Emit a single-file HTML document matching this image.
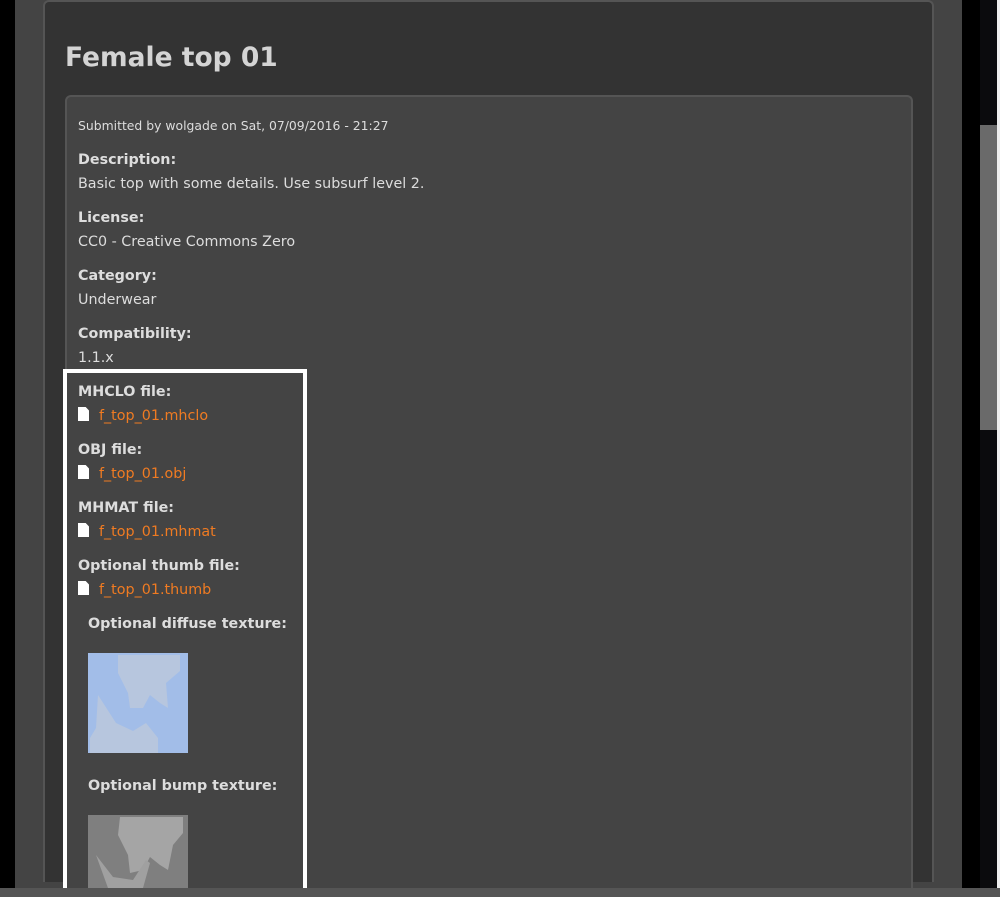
<!DOCTYPE html>
<html><head><style>
html,body{margin:0;width:1000px;height:897px;overflow:hidden;}
body{background:#000;position:relative;font-family:"DejaVu Sans","Liberation Sans",sans-serif;}
.bg{position:absolute;left:15px;top:0;width:947px;height:897px;background:#444;}
.outer{position:absolute;left:43px;top:0px;width:887px;height:880px;background:#333;border:2px solid #555;border-bottom:none;border-radius:6px 6px 0 0;}
.inner{position:absolute;left:65px;top:95px;width:844px;height:793px;background:#444;border:2px solid #555;border-bottom:none;border-radius:6px 6px 0 0;}
h1{position:absolute;left:65px;top:42px;margin:0;font-size:26.5px;font-weight:bold;color:#d4d4d4;}
.t{position:absolute;left:78px;color:#ddd;font-size:14.3px;white-space:nowrap;}
.b{font-weight:bold;}
.s{font-size:12.4px;}
a{color:#f07b22;text-decoration:none;}
.ic{display:inline-block;width:11px;height:14px;background:#fff;margin-right:10px;vertical-align:-1px;clip-path:polygon(0 0,70% 0,100% 25%,100% 100%,0 100%);}
.box{position:absolute;left:63px;top:369px;width:236px;height:516px;border:4px solid #fff;}
.sb{position:absolute;left:980px;top:0;width:17px;height:888px;background:#0b0b0d;}
.thumb{position:absolute;left:980px;top:125px;width:17px;height:305px;background:#6a6a6a;}
.bot{position:absolute;left:0;top:888px;width:1000px;height:9px;background:#555;}
.re{position:absolute;left:997px;top:0;width:3px;height:888px;background:#eee;}
</style></head><body>
<div class="bg"></div>
<div class="outer"></div>
<h1>Female top 01</h1>
<div class="inner"></div>
<div class="t s" style="top:118px">Submitted by wolgade on Sat, 07/09/2016 - 21:27</div>
<div class="t b" style="top:152px">Description:</div>
<div class="t" style="top:176px">Basic top with some details. Use subsurf level 2.</div>
<div class="t b" style="top:210px">License:</div>
<div class="t" style="top:234px">CC0 - Creative Commons Zero</div>
<div class="t b" style="top:268px">Category:</div>
<div class="t" style="top:292px">Underwear</div>
<div class="t b" style="top:326px">Compatibility:</div>
<div class="t" style="top:350px">1.1.x</div>
<div class="box"></div>
<div class="t b" style="top:384px">MHCLO file:</div>
<div class="t" style="top:407px"><span class="ic"></span><a>f_top_01.mhclo</a></div>
<div class="t b" style="top:442px">OBJ file:</div>
<div class="t" style="top:465px"><span class="ic"></span><a>f_top_01.obj</a></div>
<div class="t b" style="top:500px">MHMAT file:</div>
<div class="t" style="top:523px"><span class="ic"></span><a>f_top_01.mhmat</a></div>
<div class="t b" style="top:558px">Optional thumb file:</div>
<div class="t" style="top:581px"><span class="ic"></span><a>f_top_01.thumb</a></div>
<div class="t b" style="top:616px;left:88px">Optional diffuse texture:</div>
<svg style="position:absolute;left:88px;top:653px" width="100" height="100">
<rect width="100" height="100" fill="#a2bde8"/>
<path d="M30 2 L92 2 L92 18 L78 30 L80 55 L72 50 L62 42 L55 55 L42 55 L40 40 L30 20 Z" fill="#b7c6de"/>
<path d="M10 42 L28 70 L45 78 L58 70 L70 85 L70 100 L2 100 L2 85 L8 75 Z" fill="#b7c6de"/>
</svg>
<div class="t b" style="top:778px;left:88px">Optional bump texture:</div>
<svg style="position:absolute;left:88px;top:815px" width="100" height="73">
<rect width="100" height="73" fill="#7f7f7f"/>
<path d="M32 2 L95 2 L95 18 L85 30 L80 55 L72 50 L62 42 L55 55 L42 58 L40 40 L30 20 Z" fill="#a5a5a5"/>
<path d="M8 40 L20 73 L55 73 L62 48 L58 45 L45 65 L25 62 Z" fill="#a0a0a0"/>
</svg>
<div class="sb"></div><div class="thumb"></div><div class="re"></div>
<div class="bot"></div>
</body></html>
